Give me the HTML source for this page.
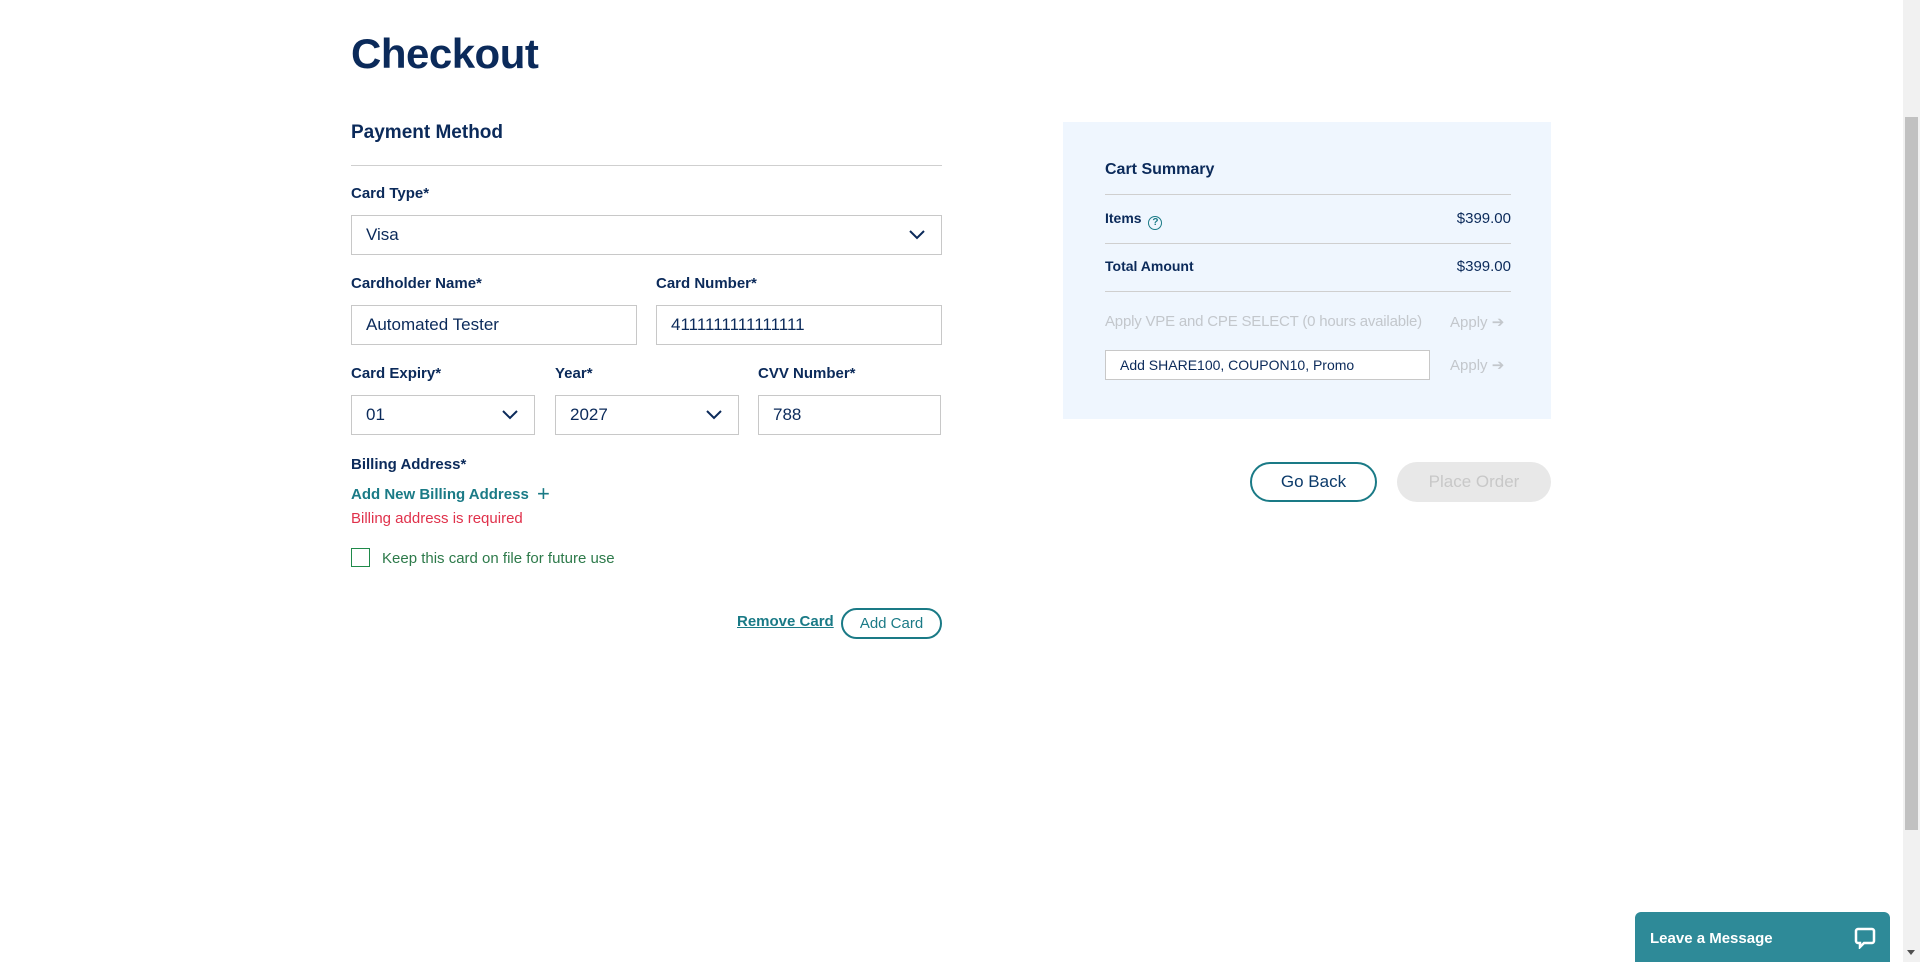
<!DOCTYPE html>
<html><head><meta charset="utf-8"><style>
*{box-sizing:border-box;margin:0;padding:0}
body{width:1920px;height:962px;overflow:hidden;background:#fff;font-family:"Liberation Sans",sans-serif;color:#0b2a5a;position:relative}
.a{position:absolute}
.lbl{font-size:15px;font-weight:bold;color:#0b2a5a}
.box{position:absolute;border:1px solid #c8c8c8;background:#fff;height:40px;font-size:17px;color:#0b2a5a;padding:0 14px;line-height:38px}
.chev{position:absolute;right:16px;top:14px;width:16px;height:10px}
.line{position:absolute;height:1px;background:#cfcfcf}
</style></head><body>
<div class="a" style="left:351px;top:30px;font-size:42px;font-weight:bold;letter-spacing:-0.5px">Checkout</div>
<div class="a" style="left:351px;top:122px;font-size:19px;font-weight:bold">Payment Method</div>
<div class="line" style="left:351px;top:165px;width:591px"></div>
<div class="a lbl" style="left:351px;top:185px">Card Type*</div>
<div class="box" style="left:351px;top:215px;width:591px">Visa<svg class="chev" viewBox="0 0 16 10"><path d="M1 1l7 7 7-7" fill="none" stroke="#0b2a5a" stroke-width="2"/></svg></div>
<div class="a lbl" style="left:351px;top:275px">Cardholder Name*</div>
<div class="a lbl" style="left:656px;top:275px">Card Number*</div>
<div class="box" style="left:351px;top:305px;width:286px">Automated Tester</div>
<div class="box" style="left:656px;top:305px;width:286px">4111111111111111</div>
<div class="a lbl" style="left:351px;top:365px">Card Expiry*</div>
<div class="a lbl" style="left:555px;top:365px">Year*</div>
<div class="a lbl" style="left:758px;top:365px">CVV Number*</div>
<div class="box" style="left:351px;top:395px;width:184px">01<svg class="chev" viewBox="0 0 16 10"><path d="M1 1l7 7 7-7" fill="none" stroke="#0b2a5a" stroke-width="2"/></svg></div>
<div class="box" style="left:555px;top:395px;width:184px">2027<svg class="chev" viewBox="0 0 16 10"><path d="M1 1l7 7 7-7" fill="none" stroke="#0b2a5a" stroke-width="2"/></svg></div>
<div class="box" style="left:758px;top:395px;width:183px">788</div>
<div class="a lbl" style="left:351px;top:456px">Billing Address*</div>
<div class="a" style="left:351px;top:479px;font-size:15px;font-weight:bold;color:#1a7a86">Add New Billing Address <span style="font-weight:normal;font-size:22px;position:relative;top:2px;margin-left:4px">+</span></div>
<div class="a" style="left:351px;top:510px;font-size:15px;color:#e0314b">Billing address is required</div>
<div class="a" style="left:351px;top:548px;width:19px;height:19px;border:1px solid #1f8a4a"></div>
<div class="a" style="left:382px;top:550px;font-size:15px;color:#2d7a4a">Keep this card on file for future use</div>
<div class="a" style="left:737px;top:613px;font-size:15px;font-weight:bold;color:#1a7a86;text-decoration:underline">Remove Card</div>
<div class="a" style="left:841px;top:608px;width:101px;height:31px;border:2px solid #1a7a86;border-radius:16px;font-size:15px;color:#1a7a86;text-align:center;line-height:27px">Add Card</div>

<div class="a" style="left:1063px;top:122px;width:488px;height:297px;background:#eff6fe"></div>
<div class="a" style="left:1105px;top:161px;font-size:16px;font-weight:bold">Cart Summary</div>
<div class="line" style="left:1105px;top:194px;width:406px"></div>
<div class="a" style="left:1105px;top:210px;font-size:14px;font-weight:bold">Items <span style="display:inline-block;width:14px;height:14px;border:1.5px solid #1a7a86;border-radius:50%;font-size:10px;color:#1a7a86;text-align:center;line-height:11px;vertical-align:-2px;margin-left:3px">?</span></div>
<div class="a" style="left:1400px;width:111px;text-align:right;top:210px;font-size:15px">$399.00</div>
<div class="line" style="left:1105px;top:243px;width:406px"></div>
<div class="a" style="left:1105px;top:258px;font-size:14px;font-weight:bold">Total Amount</div>
<div class="a" style="left:1400px;width:111px;text-align:right;top:258px;font-size:15px">$399.00</div>
<div class="line" style="left:1105px;top:291px;width:406px"></div>
<div class="a" style="left:1105px;top:313px;font-size:15px;color:#c3c7cc;letter-spacing:-0.2px">Apply VPE and CPE SELECT (0 hours available)</div>
<div class="a" style="left:1450px;top:313px;font-size:15px;color:#c3c7cc">Apply ➔</div>
<div class="a" style="left:1105px;top:350px;width:325px;height:30px;border:1px solid #c8c8c8;background:#fff;font-size:14px;padding-left:14px;line-height:28px">Add SHARE100, COUPON10, Promo</div>
<div class="a" style="left:1450px;top:356px;font-size:15px;color:#c3c7cc">Apply ➔</div>

<div class="a" style="left:1250px;top:462px;width:127px;height:40px;border:2px solid #1a7a86;border-radius:20px;text-align:center;line-height:36px;font-size:17px;color:#0b3a6a">Go Back</div>
<div class="a" style="left:1397px;top:462px;width:154px;height:40px;border-radius:20px;background:#e8e8e8;text-align:center;line-height:40px;font-size:17px;color:#c8c8c8">Place Order</div>

<div class="a" style="left:1635px;top:912px;width:255px;height:50px;background:#2e8a98;border-radius:6px 6px 0 0;color:#fff;font-size:15px;font-weight:bold;padding:18px 0 0 15px">Leave a Message
<svg class="a" style="right:14px;top:15px" width="22" height="22" viewBox="0 0 22 22"><path d="M4 2h14a2 2 0 0 1 2 2v10a2 2 0 0 1-2 2H10l-4 4v-4H4a2 2 0 0 1-2-2V4a2 2 0 0 1 2-2z" fill="none" stroke="#fff" stroke-width="2.5"/></svg></div>

<div class="a" style="left:1903px;top:0;width:17px;height:962px;background:#f1f1f1"></div>
<div class="a" style="left:1905px;top:117px;width:13px;height:713px;background:#c1c1c1"></div>
<div class="a" style="left:1907px;top:950px;width:0;height:0;border-left:4px solid transparent;border-right:4px solid transparent;border-top:5px solid #505050"></div>
</body></html>
